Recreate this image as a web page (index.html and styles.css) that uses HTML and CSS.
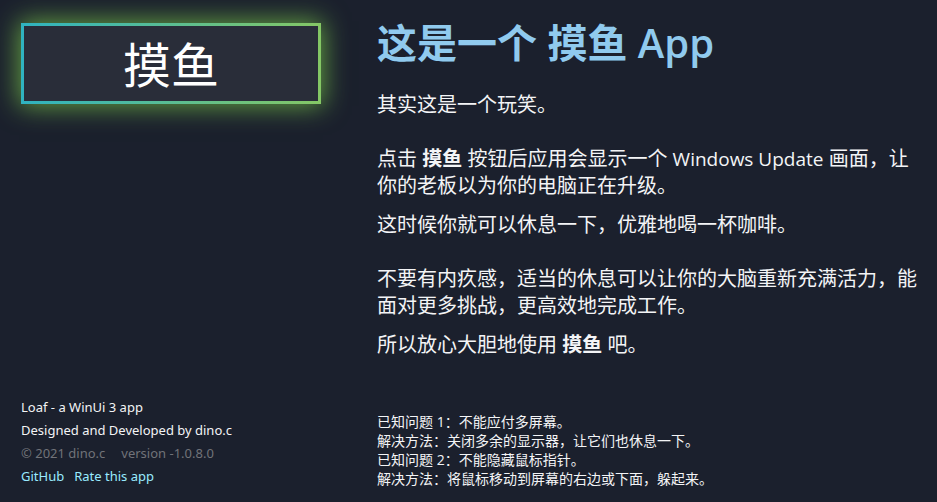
FILE: index.html
```html
<!DOCTYPE html>
<html lang="zh-CN">
<head>
<meta charset="utf-8">
<meta name="viewport" content="width=device-width, initial-scale=1">
<title>摸鱼</title>
<link rel="stylesheet" href="styles.css">
</head>
<body>
<div class="app">
  <aside class="side">
    <button class="start" type="button">摸鱼</button>
    <footer class="about" lang="en">
      <p>Loaf - a WinUi 3 app</p>
      <p>Designed and Developed by dino.c</p>
      <p class="muted"><span>© 2021 dino.c</span><span>version -1.0.8.0</span></p>
      <nav class="links"><a href="#github">GitHub</a><a href="#rate">Rate this app</a></nav>
    </footer>
  </aside>
  <main class="content">
    <h1>这是一个 摸鱼 <span class="latin">App</span></h1>
    <div class="story">
      <section>
        <p>其实这是一个玩笑。</p>
      </section>
      <section>
        <p>点击 <strong>摸鱼</strong> 按钮后应用会显示一个 <span class="product">Windows Update</span> 画面，让你的老板以为你的电脑正在升级。</p>
        <p>这时候你就可以休息一下，优雅地喝一杯咖啡。</p>
      </section>
      <section>
        <p>不要有内疚感，适当的休息可以让你的大脑重新充满活力，能面对更多挑战，更高效地完成工作。</p>
        <p>所以放心大胆地使用 <strong>摸鱼</strong> 吧。</p>
      </section>
    </div>
    <div class="issues">
      <p>已知问题 1：不能应付多屏幕。</p>
      <p>解决方法：关闭多余的显示器，让它们也休息一下。</p>
      <p>已知问题 2：不能隐藏鼠标指针。</p>
      <p>解决方法：将鼠标移动到屏幕的右边或下面，躲起来。</p>
    </div>
  </main>
</div>
</body>
</html>
```
FILE: styles.css
```css
* {
  box-sizing: border-box;
}

body {
  margin: 0;
  background: #1b202d;
  color: #f3f4f6;
  font-family: "Open Sans", "Noto Sans CJK SC", sans-serif;
}

h1,
p {
  margin: 0;
}

.app {
  display: grid;
  grid-template-columns: 300px 1fr;
  gap: 56px;
  min-height: 100vh;
  padding: 16px 16px 14px 21px;
}

.side,
.content {
  display: flex;
  flex-direction: column;
  justify-content: space-between;
}

.start {
  height: 81px;
  margin-top: 7px;
  padding: 2px 0 0;
  border: 3px solid transparent;
  background:
    linear-gradient(#292d39, #292d39) padding-box,
    linear-gradient(to right, #2fb3c0, #85c765) border-box;
  box-shadow: 0 0 24px 2px rgba(125, 205, 75, 0.75);
  color: #fff;
  font-family: inherit;
  font-size: 48px;
  line-height: 64px;
}

.about {
  font-family: "Noto Sans", sans-serif;
  font-size: 13px;
  line-height: 23px;
}

.muted {
  display: flex;
  gap: 16px;
  color: #717379;
}

.links {
  display: flex;
  gap: 10px;
}

.links a {
  color: #99ebff;
  text-decoration: none;
}

h1 {
  color: #90caee;
  font-size: 40px;
  font-weight: 700;
  line-height: 54px;
}

.latin {
  font-weight: 600;
}

.story {
  display: grid;
  gap: 27px;
  margin: 21px 0 auto;
  font-size: 20px;
  line-height: 27px;
}

.story p + p {
  margin-top: 12px;
}

.product {
  font-size: 19px;
  line-height: 20px;
}

.issues {
  margin-top: 24px;
  font-size: 14px;
  line-height: 19px;
}
```
